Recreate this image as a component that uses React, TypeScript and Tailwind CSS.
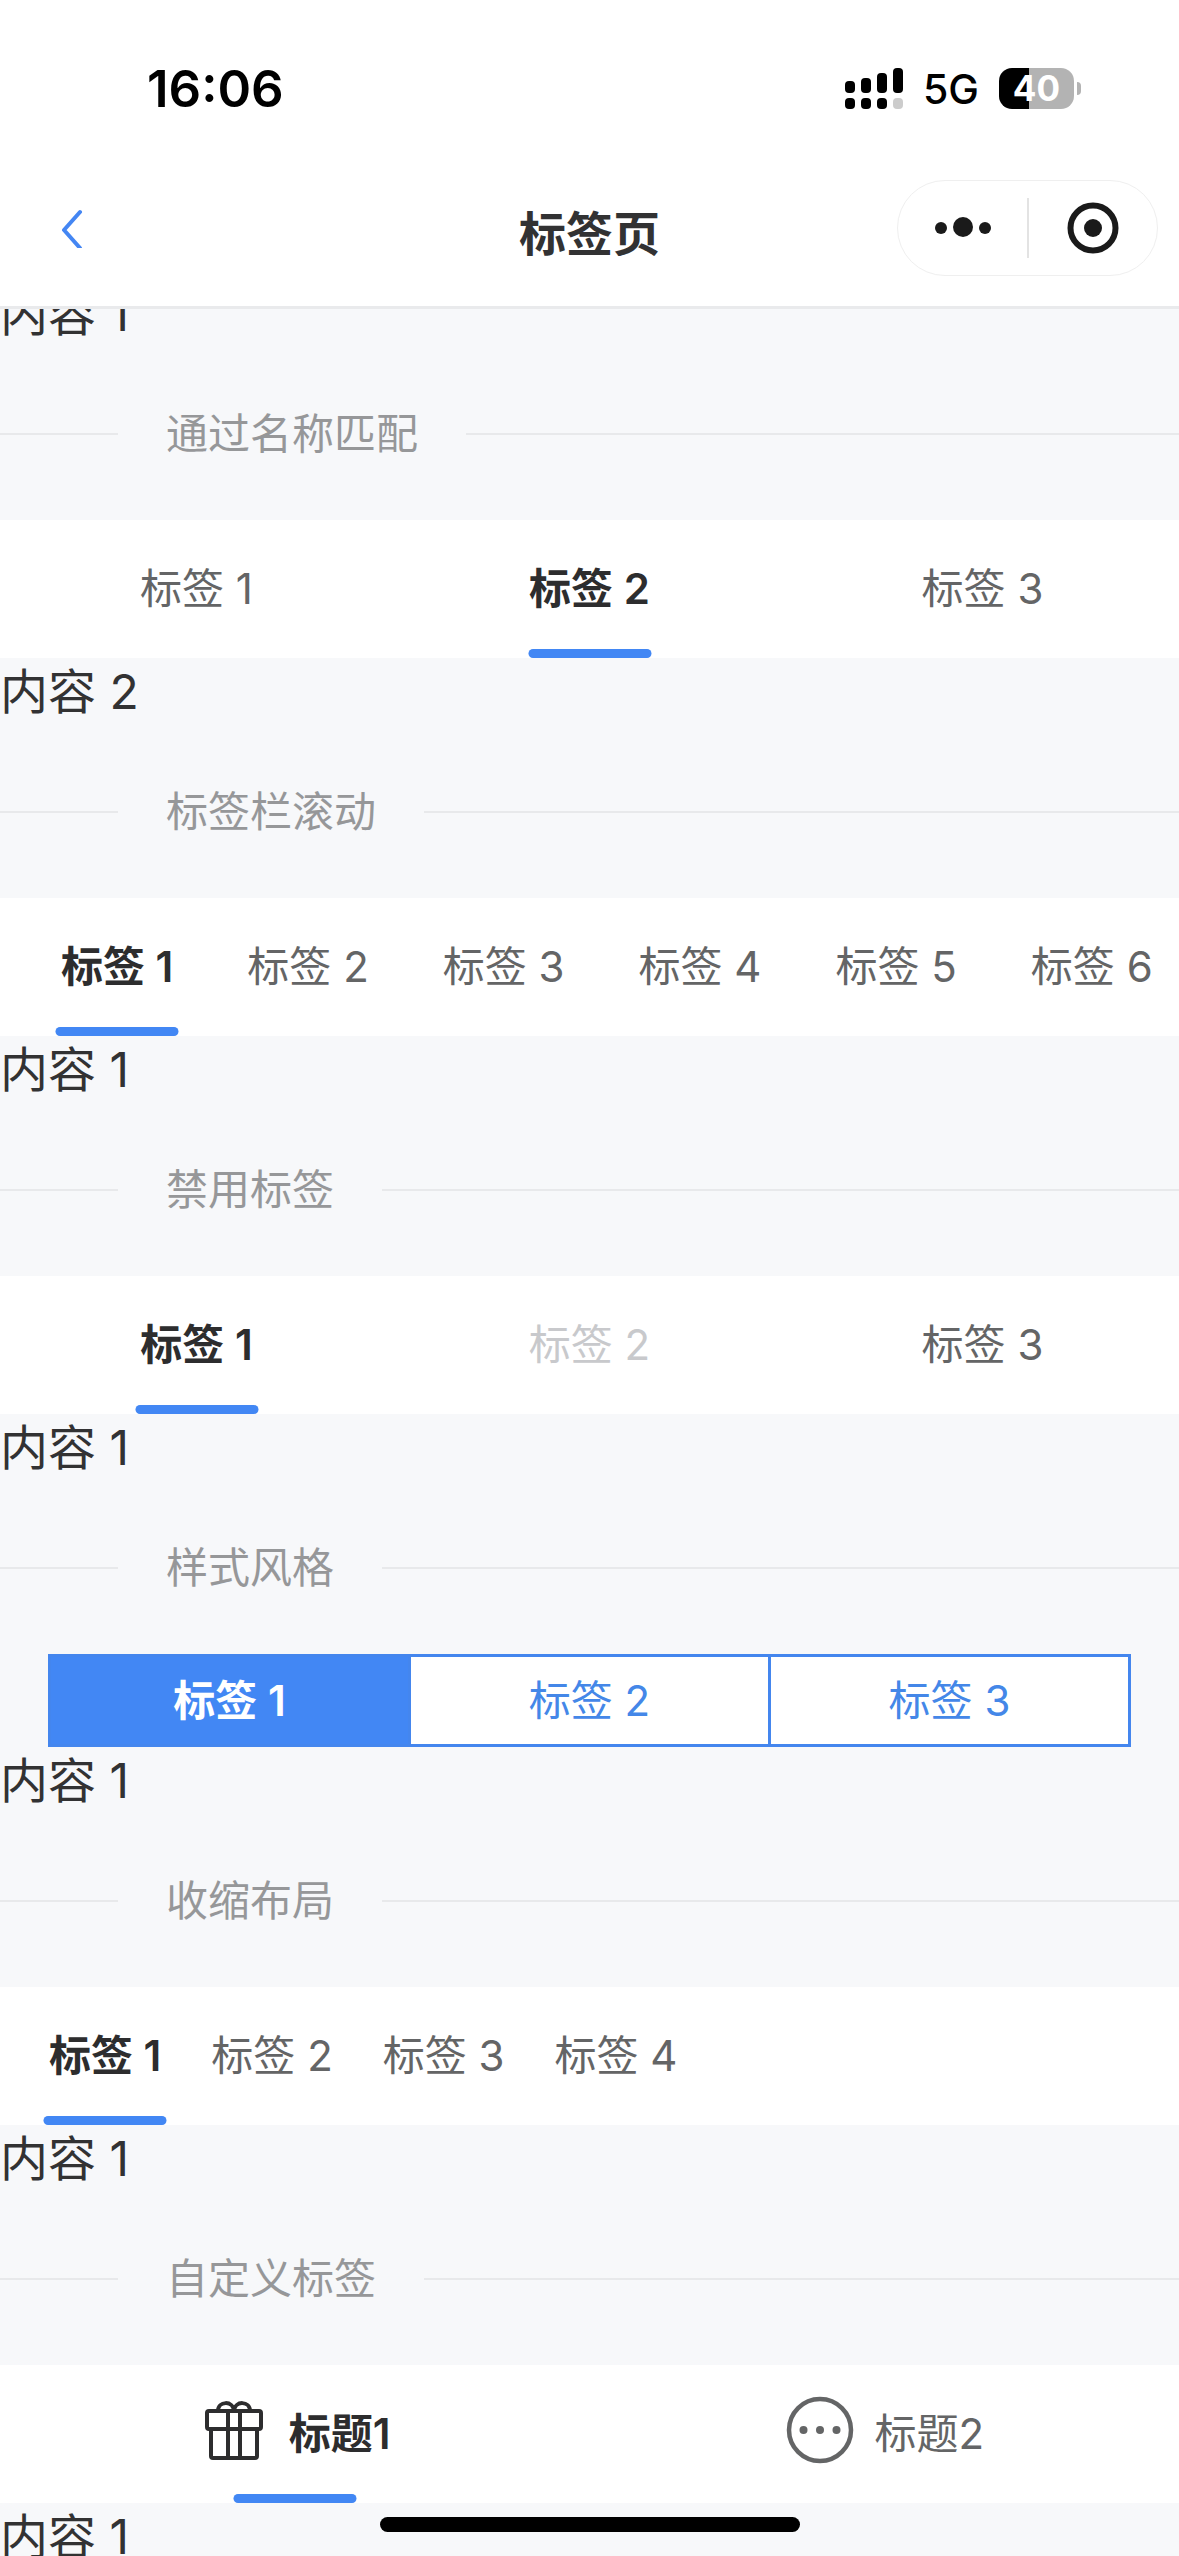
import { useState } from "react";
import type { ReactNode } from "react";
import clsx from "clsx";

type TabItem = { label: string; icon?: ReactNode; disabled?: boolean };
type Variant = "even" | "scroll" | "shrink" | "card";

function SignalIcon() {
  return (
    <svg width="58" height="42" viewBox="0 0 58 42" aria-hidden="true">
      <rect x="0" y="13" width="10" height="12" rx="4" />
      <rect x="16" y="10" width="10" height="15" rx="4" />
      <rect x="32" y="5" width="10" height="20" rx="4" />
      <rect x="48" y="0" width="10" height="25" rx="4" />
      <rect x="0" y="30" width="10" height="11" rx="4" />
      <rect x="16" y="30" width="10" height="11" rx="4" />
      <rect x="32" y="30" width="10" height="11" rx="4" />
      <rect x="48" y="30" width="10" height="11" rx="4" fill="#cccccc" />
    </svg>
  );
}

function Battery() {
  return (
    <div className="flex items-center gap-[3px]">
      <div className="flex h-[41px] w-[75px] items-center justify-center rounded-[13px] bg-[linear-gradient(to_right,#000_40%,#b3b3b3_40%)] text-[35px] leading-none font-bold text-white">
        40
      </div>
      <div className="h-[13px] w-1 rounded-r-full bg-[#b3b3b3]" />
    </div>
  );
}

function StatusBar() {
  return (
    <div className="flex h-[150px] items-center justify-between pt-[27px] pr-[98px] pl-[147px] text-black">
      <span className="text-[51px] leading-none font-semibold">16:06</span>
      <div className="flex items-center gap-5">
        <SignalIcon />
        <span className="pt-0.5 text-[41px] leading-none font-medium">5G</span>
        <Battery />
      </div>
    </div>
  );
}

function NavBar() {
  return (
    <div className="grid h-[156px] grid-cols-[1fr_auto_1fr] items-center">
      <button type="button" aria-label="返回" className="ml-[60px] w-6">
        <svg width="24" height="40" viewBox="0 0 24 40" fill="none" stroke="#4486f3" strokeWidth="4" strokeLinecap="round" strokeLinejoin="round">
          <path d="M20 4 4 22 20 40" />
        </svg>
      </button>
      <h1 className="pt-3 text-[47px] leading-[68px] font-semibold text-[#323233]">标签页</h1>
      <div className="mr-[21px] flex h-24 w-[261px] items-center justify-self-end rounded-full border border-[#efefef]">
        <button type="button" aria-label="更多" className="flex flex-1 justify-center">
          <svg width="58" height="52" viewBox="0 0 58 52" fill="#1a1a1a">
            <circle cx="8" cy="26" r="6" />
            <circle cx="30" cy="25" r="10" />
            <circle cx="52" cy="26" r="6" />
          </svg>
        </button>
        <div className="h-15 w-0.5 bg-[#e3e3e3]" />
        <button type="button" aria-label="关闭" className="flex flex-1 justify-center">
          <svg width="52" height="52" viewBox="0 0 52 52" fill="none">
            <circle cx="26" cy="26" r="22.5" stroke="#1a1a1a" strokeWidth="6" />
            <circle cx="26" cy="26" r="9" fill="#1a1a1a" />
          </svg>
        </button>
      </div>
    </div>
  );
}

function GiftIcon() {
  return (
    <svg width="70" height="70" viewBox="0 0 70 70" fill="none" stroke="currentColor" strokeWidth="4" strokeLinejoin="round" aria-hidden="true">
      <rect x="8" y="16" width="54" height="18" rx="2" />
      <path d="M12 34v27q0 2 2 2h42q2 0 2-2V34" />
      <path d="M29 16v47M41 16v47" />
      <path d="M19 16c0-10 15-11 16 0M35 16c1-11 16-10 16 0" />
    </svg>
  );
}

function MoreCircleIcon() {
  return (
    <svg width="70" height="70" viewBox="0 0 70 70" fill="none" aria-hidden="true">
      <circle cx="36" cy="35" r="31" stroke="currentColor" strokeWidth="4.5" />
      <circle cx="19.5" cy="35" r="4" fill="currentColor" />
      <circle cx="36" cy="35" r="4" fill="currentColor" />
      <circle cx="52.5" cy="35" r="4" fill="currentColor" />
    </svg>
  );
}

function Divider({ children }: { children: ReactNode }) {
  return (
    <div className="flex h-[172px] items-center gap-12">
      <div className="h-0.5 w-[10%] bg-[#e8e9eb]" />
      <h2 className="text-[42px] leading-[60px] text-[#969799]">{children}</h2>
      <div className="h-0.5 flex-1 bg-[#e8e9eb]" />
    </div>
  );
}

function Panel({ children }: { children: ReactNode }) {
  return <p className="text-[48px] leading-[68px] text-[#323233]">{children}</p>;
}

function Tabs({ items, variant = "even", initial = 0 }: { items: TabItem[]; variant?: Variant; initial?: number }) {
  const [active, setActive] = useState(initial);

  if (variant === "card") {
    return (
      <div>
        <div role="tablist" className="mx-12 flex h-[93px] border-[3px] border-[#4486ee] bg-white">
          {items.map((item, i) => (
            <button
              key={item.label}
              type="button"
              role="tab"
              aria-selected={i === active}
              onClick={() => setActive(i)}
              className={clsx(
                "flex-1 border-r-[3px] border-[#4486ee] text-[42px] leading-[60px] last:border-r-0",
                i === active ? "bg-[#4287f4] font-semibold text-white" : "text-[#4487e8]",
              )}
            >
              {item.label}
            </button>
          ))}
        </div>
        <Panel>内容 {active + 1}</Panel>
      </div>
    );
  }

  return (
    <div>
      <div
        role="tablist"
        className={clsx("flex h-[138px] overflow-hidden bg-white", variant !== "even" && "pl-6")}
      >
        {items.map((item, i) => (
          <button
            key={item.label}
            type="button"
            role="tab"
            aria-selected={i === active}
            disabled={item.disabled}
            onClick={() => setActive(i)}
            className={clsx(
              "relative flex items-center justify-center gap-5 text-[42px] leading-[60px] whitespace-nowrap",
              variant === "even" && "flex-1",
              variant === "scroll" && "shrink-0 px-[37px]",
              variant === "shrink" && "shrink-0 px-[25px]",
              item.disabled ? "text-[#c8c9cc]" : i === active ? "font-semibold text-[#2d2d2e]" : "text-[#646566]",
            )}
          >
            {item.icon && <span className="mb-2">{item.icon}</span>}
            <span>{item.label}</span>
            {i === active && (
              <span className="absolute bottom-0 left-1/2 h-[9px] w-[123px] -translate-x-1/2 rounded-full bg-[#4287f4]" />
            )}
          </button>
        ))}
      </div>
      <Panel>内容 {active + 1}</Panel>
    </div>
  );
}

const tabs = (count: number): TabItem[] => Array.from({ length: count }, (_, i) => ({ label: `标签 ${i + 1}` }));

const disabledTabs: TabItem[] = tabs(3).map((tab, i) => ({ ...tab, disabled: i === 1 }));

const customTabs: TabItem[] = [
  { label: "标题1", icon: <GiftIcon /> },
  { label: "标题2", icon: <MoreCircleIcon /> },
];

export default function App() {
  return (
    <div className="h-screen overflow-hidden bg-[#f7f8fa] font-['Inter','Noto_Sans_CJK_SC',sans-serif]">
      <header className="relative z-10 border-b-[3px] border-[#e9eaec] bg-white">
        <StatusBar />
        <NavBar />
      </header>
      <main className="-mt-[29px]">
        <Panel>内容 1</Panel>
        <Divider>通过名称匹配</Divider>
        <Tabs items={tabs(3)} initial={1} />
        <Divider>标签栏滚动</Divider>
        <Tabs items={tabs(6)} variant="scroll" />
        <Divider>禁用标签</Divider>
        <Tabs items={disabledTabs} />
        <Divider>样式风格</Divider>
        <Tabs items={tabs(3)} variant="card" />
        <Divider>收缩布局</Divider>
        <Tabs items={tabs(4)} variant="shrink" />
        <Divider>自定义标签</Divider>
        <Tabs items={customTabs} />
      </main>
      <div className="fixed bottom-6 left-1/2 z-20 h-[15px] w-[420px] -translate-x-1/2 rounded-full bg-black" />
    </div>
  );
}
